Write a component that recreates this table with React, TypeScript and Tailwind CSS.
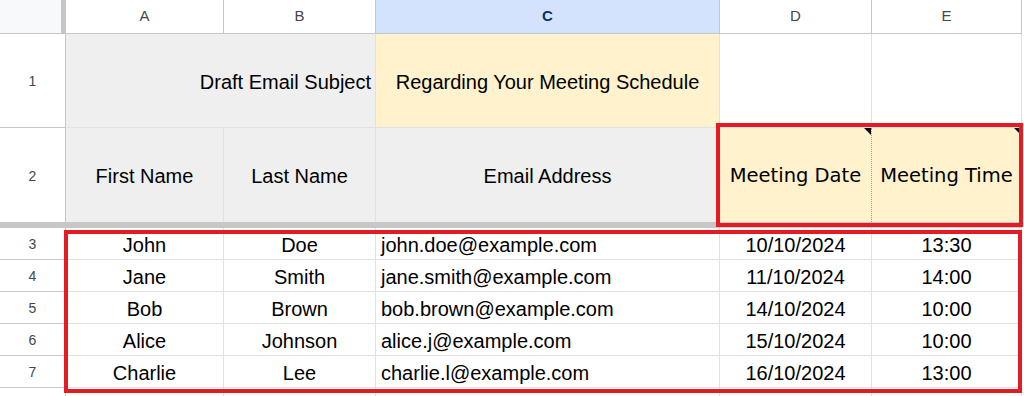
import React from 'react';

type Row = { n: number; first: string; last: string; email: string; date: string; time: string };

const rows: Row[] = [
  { n: 3, first: 'John', last: 'Doe', email: 'john.doe@example.com', date: '10/10/2024', time: '13:30' },
  { n: 4, first: 'Jane', last: 'Smith', email: 'jane.smith@example.com', date: '11/10/2024', time: '14:00' },
  { n: 5, first: 'Bob', last: 'Brown', email: 'bob.brown@example.com', date: '14/10/2024', time: '10:00' },
  { n: 6, first: 'Alice', last: 'Johnson', email: 'alice.j@example.com', date: '15/10/2024', time: '10:00' },
  { n: 7, first: 'Charlie', last: 'Lee', email: 'charlie.l@example.com', date: '16/10/2024', time: '13:00' },
];

const NoteMark = () => (
  <span className="absolute top-0 right-0 w-0 h-0 border-t-[7px] border-l-[7px] border-t-black border-l-transparent" />
);

export default function App() {
  return (
    <div className="relative w-[1024px] h-[396px] overflow-hidden bg-white font-['Liberation_Sans',Arial,sans-serif] text-black">
      {/* column headers */}
      <div className="flex h-[34px]">
        <div className="w-[61px] h-full bg-[#f8f9fa] border-b border-[#c4c7c5]" />
        <div className="w-[5px] h-full bg-[#c7c7c7]" />
        <div className="w-[158px] flex items-center justify-center border-r border-b border-[#c4c7c5] text-[15px] text-[#444746]">A</div>
        <div className="w-[152px] flex items-center justify-center border-r border-b border-[#c4c7c5] text-[15px] text-[#444746]">B</div>
        <div className="w-[344px] flex items-center justify-center border-r border-b border-[#c4c7c5] bg-[#d3e3fd] text-[15px] font-bold text-[#0b2f6b]">C</div>
        <div className="w-[152px] flex items-center justify-center border-r border-b border-[#c4c7c5] text-[15px] text-[#444746]">D</div>
        <div className="w-[150px] flex items-center justify-center border-r border-b border-[#c4c7c5] text-[15px] text-[#444746]">E</div>
      </div>

      {/* row 1 */}
      <div className="flex h-[94px]">
        <div className="w-[66px] flex items-center justify-center pt-[2px] border-r border-b border-[#c4c7c5] text-[14px] text-[#444746]">1</div>
        <div className="w-[310px] flex items-center justify-end pr-[4px] pt-[3px] border-r border-b border-[#e1e1e1] bg-[#efefef] text-[20px]">Draft Email Subject</div>
        <div className="w-[344px] flex items-center justify-center pt-[3px] border-r border-b border-[#e1e1e1] bg-[#fff2cc] text-[20px]">Regarding Your Meeting Schedule</div>
        <div className="w-[152px] border-r border-b border-[#e1e1e1]" />
        <div className="w-[150px] border-r border-b border-[#e1e1e1]" />
      </div>

      {/* row 2 */}
      <div className="flex h-[94px]">
        <div className="w-[66px] flex items-center justify-center pt-[2px] border-r border-[#c4c7c5] text-[14px] text-[#444746]">2</div>
        <div className="w-[158px] flex items-center justify-center pt-[2px] border-r border-[#e1e1e1] bg-[#efefef] text-[20px]">First Name</div>
        <div className="w-[152px] flex items-center justify-center pt-[2px] border-r border-[#e1e1e1] bg-[#efefef] text-[20px]">Last Name</div>
        <div className="w-[344px] flex items-center justify-center pt-[2px] border-r border-[#e1e1e1] bg-[#efefef] text-[20px]">Email Address</div>
        <div className="relative w-[152px] flex items-center justify-center pt-[2px] border-r border-dotted border-[#9a9a9a] bg-[#fff2cc] text-[19.5px] font-['DejaVu_Sans',sans-serif]">
          Meeting Date
          <NoteMark />
        </div>
        <div className="relative w-[150px] flex items-center justify-center pt-[2px] border-r border-[#e1e1e1] bg-[#fff2cc] text-[19.5px] font-['DejaVu_Sans',sans-serif]">
          Meeting Time
          <NoteMark />
        </div>
      </div>

      {/* frozen divider */}
      <div className="h-[6px] w-[1022px] bg-[#c7c7c7]" />

      {/* data rows */}
      {rows.map((r) => (
        <div key={r.n} className="flex h-[32px] text-[20px]">
          <div className="w-[66px] flex items-center justify-center pt-[2px] border-r border-b border-[#c4c7c5] text-[14px] text-[#444746]">{r.n}</div>
          <div className="w-[158px] flex items-center justify-center pt-[3px] border-r border-b border-[#e1e1e1]">{r.first}</div>
          <div className="w-[152px] flex items-center justify-center pt-[3px] border-r border-b border-[#e1e1e1]">{r.last}</div>
          <div className="w-[344px] flex items-center pl-[5px] pt-[3px] border-r border-b border-[#e1e1e1]">{r.email}</div>
          <div className="w-[152px] flex items-center justify-center pt-[3px] border-r border-b border-[#e1e1e1]">{r.date}</div>
          <div className="w-[150px] flex items-center justify-center pt-[3px] border-r border-b border-[#e1e1e1]">{r.time}</div>
        </div>
      ))}
      <div className="flex h-[32px]">
        <div className="w-[66px] border-r border-[#c4c7c5]" />
        <div className="w-[158px] border-r border-[#e1e1e1]" />
        <div className="w-[152px] border-r border-[#e1e1e1]" />
        <div className="w-[344px] border-r border-[#e1e1e1]" />
        <div className="w-[152px] border-r border-[#e1e1e1]" />
        <div className="w-[150px] border-r border-[#e1e1e1]" />
      </div>

      {/* highlight boxes */}
      <div className="absolute left-[716px] top-[123px] w-[307px] h-[104px] border-[4px] border-[#e31b23]" />
      <div className="absolute left-[64px] top-[230px] w-[958px] h-[163px] border-[4px] border-[#e31b23]" />
    </div>
  );
}
